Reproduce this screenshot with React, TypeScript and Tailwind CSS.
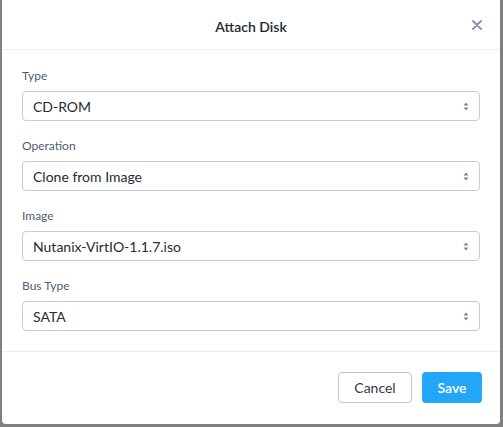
import React from 'react';

const fields = [
  { label: 'Type', value: 'CD-ROM' },
  { label: 'Operation', value: 'Clone from Image' },
  { label: 'Image', value: 'Nutanix-VirtIO-1.1.7.iso' },
  { label: 'Bus Type', value: 'SATA' },
];

const SortArrows = () => (
  <svg width="6" height="9" viewBox="0 0 6 9" className="text-[#7a8698]">
    <path d="M3 0.5 L5.5 3.5 L0.5 3.5 Z" fill="currentColor" />
    <path d="M3 8.5 L5.5 5.5 L0.5 5.5 Z" fill="currentColor" />
  </svg>
);

const App: React.FC = () => {
  return (
    <div
      className="w-[503px] h-[427px] bg-[#808080] pl-[2px] overflow-hidden"
      style={{ fontFamily: 'Lato, "Open Sans", sans-serif' }}
    >
      <div className="w-[498px] h-[424px] bg-white rounded-b-[4px] flex flex-col">
        {/* Header */}
        <div className="h-[50px] border-b border-[#eceef1] flex items-center justify-center relative">
          <h2 className="text-[14px] font-semibold text-[#22272e] mt-[3px]">Attach Disk</h2>
          <button className="absolute right-[18px] top-[20px] text-[#8592a6]">
            <svg width="10" height="10" viewBox="0 0 10 10">
              <path d="M1 1 L9 9 M9 1 L1 9" stroke="currentColor" strokeWidth="1.8" strokeLinecap="round" />
            </svg>
          </button>
        </div>

        {/* Body */}
        <div className="flex-1 px-[20px] pt-[19px] border-b border-[#eceef1] flex flex-col gap-[18px]">
          {fields.map((f) => (
            <div key={f.label} className="flex flex-col">
              <label className="text-[12px] leading-[14px] text-[#4f5d70] mb-[8px]">{f.label}</label>
              <div className="h-[30px] border border-[#c6ccd5] rounded-[4px] flex items-center justify-between pl-[10px] pr-[10px]">
                <span className="text-[14px] text-[#262b33]">{f.value}</span>
                <SortArrows />
              </div>
            </div>
          ))}
        </div>

        {/* Footer */}
        <div className="h-[72px] flex items-start justify-end gap-[10px] pr-[18px] pt-[20px]">
          <button className="h-[31px] w-[74px] border border-[#bfc6d0] rounded-[4px] text-[14px] text-[#333a44] bg-white">
            Cancel
          </button>
          <button className="h-[31px] w-[60px] rounded-[4px] text-[14px] font-semibold text-white bg-[#22a7f8]">
            Save
          </button>
        </div>
      </div>
    </div>
  );
};

export default App;
